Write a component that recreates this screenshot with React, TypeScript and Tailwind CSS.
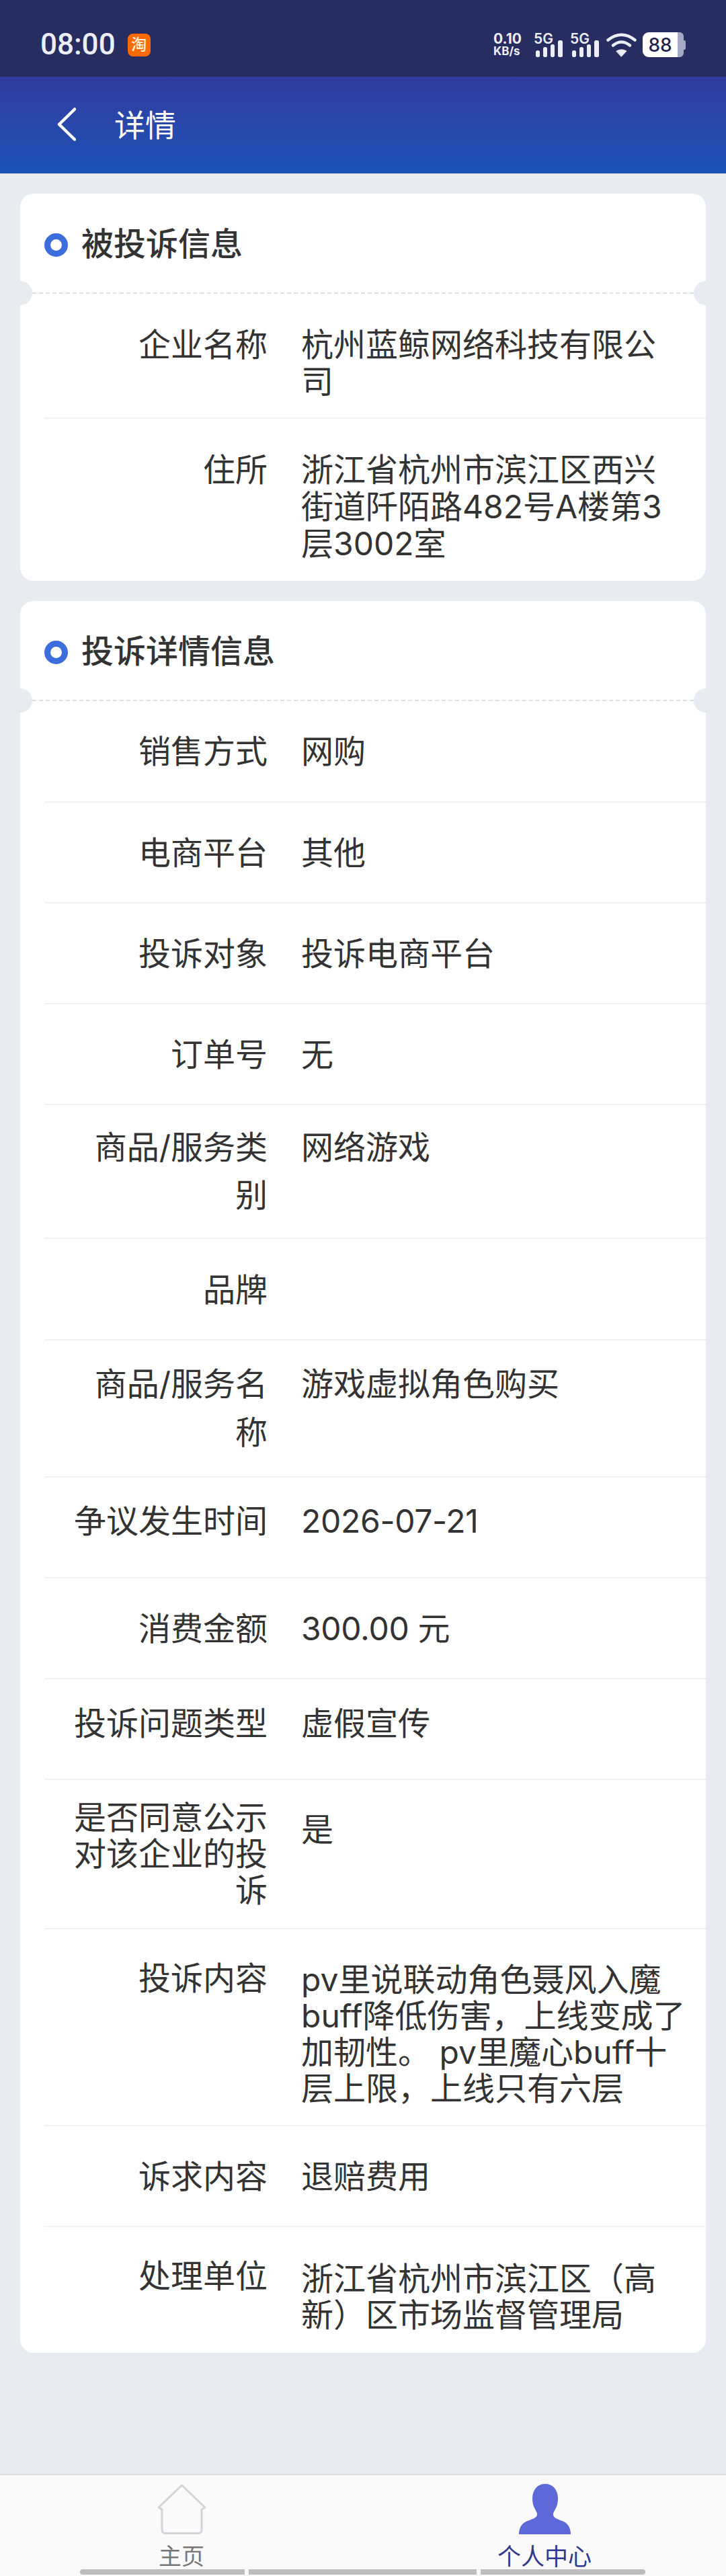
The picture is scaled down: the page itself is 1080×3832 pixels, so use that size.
type Row = {
  label: string;
  value?: string;
  rowClass: string;
  valueClass?: string;
};

const companyRows: Row[] = [
  { label: '企业名称', value: '杭州蓝鲸网络科技有限公司', rowClass: 'pt-[48px] pb-[26px] leading-[55px]' },
  { label: '住所', value: '浙江省杭州市滨江区西兴街道阡陌路482号A楼第3层3002室', rowClass: 'border-t-2 pt-[48px] pb-[28px] leading-[55px]' },
];

const detailRows: Row[] = [
  { label: '销售方式', value: '网购', rowClass: 'pt-[48px] pb-[47px] leading-[54px]' },
  { label: '电商平台', value: '其他', rowClass: 'border-t-2 pt-[48px] pb-[46px] leading-[54px]' },
  { label: '投诉对象', value: '投诉电商平台', rowClass: 'border-t-2 pt-[48px] pb-[46px] leading-[54px]' },
  { label: '订单号', value: '无', rowClass: 'border-t-2 pt-[48px] pb-[46px] leading-[54px]' },
  { label: '商品/服务类别', value: '网络游戏', rowClass: 'border-t-2 pt-[27px] pb-[28px] leading-[71px]' },
  { label: '品牌', rowClass: 'border-t-2 pt-[49px] pb-[46px] leading-[54px]' },
  { label: '商品/服务名称', value: '游戏虚拟角色购买', rowClass: 'border-t-2 pt-[29px] pb-[29px] leading-[72px]' },
  { label: '争议发生时间', value: '2026-07-21', rowClass: 'border-t-2 pt-[38px] pb-[56px] leading-[54px]', valueClass: 'tracking-[-0.3px]' },
  { label: '消费金额', value: '300.00 元', rowClass: 'border-t-2 pt-[48px] pb-[46px] leading-[54px]', valueClass: 'tracking-[-0.3px]' },
  { label: '投诉问题类型', value: '虚假宣传', rowClass: 'border-t-2 pt-[39px] pb-[55px] leading-[54px]' },
  { label: '是否同意公示对该企业的投诉', value: '是', rowClass: 'border-t-2 pt-[29px] pb-[29px] leading-[54px]', valueClass: 'pt-[18px]' },
  {
    label: '投诉内容',
    value: 'pv里说联动角色聂风入魔buff降低伤害，上线变成了加韧性。 pv里魔心buff十层上限，上线只有六层',
    rowClass: 'border-t-2 pt-[46px] pb-[27px] leading-[54px]',
    valueClass: 'pt-[2px]',
  },
  { label: '诉求内容', value: '退赔费用', rowClass: 'border-t-2 pt-[48px] pb-[46px] leading-[54px]' },
  {
    label: '处理单位',
    value: '浙江省杭州市滨江区（高新）区市场监督管理局',
    rowClass: 'border-t-2 pt-[46px] pb-[29px] leading-[54px]',
    valueClass: 'pt-[4px]',
  },
];

function Signal() {
  return (
    <div className="relative w-[43px] h-[37px]">
      <span className="absolute left-0 top-0 text-[21px] leading-[19px] font-semibold text-[#eceef7]">5G</span>
      <svg viewBox="0 0 43 25" className="absolute left-0 bottom-0 w-[43px] h-[25px]" fill="#eceef7">
        <rect x="3" y="15" width="6" height="10" rx="2.5" />
        <rect x="14" y="10" width="6" height="15" rx="2.5" />
        <rect x="25" y="6" width="6" height="19" rx="2.5" />
        <rect x="36" y="0" width="7" height="25" rx="2.5" />
      </svg>
    </div>
  );
}

function StatusBar() {
  return (
    <div className="h-[114px] bg-[#272c61] pt-[48px] pl-[60px] flex items-start text-[#eceef7]">
      <div className="flex items-center h-[37px]">
        <span className="text-[44px] leading-[37px] font-medium font-['Roboto',sans-serif]">08:00</span>
        <span className="ml-[18px] w-[34px] h-[34px] rounded-[8px] bg-[#ff6a00] flex items-center justify-center text-[23px] leading-none font-medium text-[#fff3e0]">
          淘
        </span>
      </div>
      <div className="ml-auto mr-[60px] flex items-start h-[37px]">
        <div className="w-[44px] flex flex-col items-start font-bold">
          <span className="text-[21px] leading-[20px]">0.10</span>
          <span className="text-[17px] leading-[17px]">KB/s</span>
        </div>
        <div className="ml-[16px]">
          <Signal />
        </div>
        <div className="ml-[11px]">
          <Signal />
        </div>
        <svg viewBox="0 0 45 37" className="ml-[11px] w-[45px] h-[37px]" fill="none" stroke="#eceef7" strokeWidth="4.5" strokeLinecap="round">
          <path d="M2.5 11.5 Q22.5 -4 42.5 11.5" />
          <path d="M10 19.5 Q22.5 9.5 35 19.5" />
          <path d="M15 28 Q22.5 23.5 30 28 L22.5 36 Z" fill="#eceef7" strokeWidth="1" strokeLinejoin="round" />
        </svg>
        <div className="ml-[9px] flex items-center h-[37px]">
          <span className="w-[52px] h-[37px] bg-white rounded-l-[9px] flex items-center justify-center text-[28px] leading-none font-medium text-[#1f2350]">
            88
          </span>
          <span className="w-[9px] h-[37px] bg-[#a6a9c4] rounded-r-[6px]" />
          <span className="w-[3px] h-[14px] bg-[#a6a9c4] rounded-r-[2px]" />
        </div>
      </div>
    </div>
  );
}

function InfoRow({ row }: { row: Row }) {
  return (
    <div className={`ml-[36px] flex border-[#f1f2f4] ${row.rowClass}`}>
      <div className="ml-[36px] w-[296px] shrink-0 text-right">{row.label}</div>
      <div className={`ml-[50px] w-[575px] ${row.valueClass ?? ''}`}>{row.value}</div>
    </div>
  );
}

function Card({ title, rows }: { title: string; rows: Row[] }) {
  return (
    <section className="relative bg-white rounded-[20px]">
      <div className="h-[147px] pt-[5px] pl-[36px] flex items-center">
        <span className="w-[35px] h-[35px] rounded-full border-[9px] border-[#3c6ddd]" />
        <h2 className="ml-[20px] pb-[3px] text-[48px] leading-[54px] font-medium">{title}</h2>
      </div>
      <div className="relative mx-[18px] border-t-2 border-dashed border-[#dfe1e5]">
        <span className="absolute left-[-36px] top-[-19px] w-[36px] h-[36px] rounded-full bg-[#e8ecf1]" />
        <span className="absolute right-[-36px] top-[-19px] w-[36px] h-[36px] rounded-full bg-[#e8ecf1]" />
      </div>
      {rows.map((row) => (
        <InfoRow key={row.label} row={row} />
      ))}
    </section>
  );
}

function TabBar() {
  return (
    <footer className="border-t-2 border-[#dcdfe3] bg-[#fafafa]">
      <div className="flex pt-[13px]">
        <div className="w-1/2 flex flex-col items-center">
          <svg viewBox="0 0 73 75" className="w-[73px] h-[75px]" fill="none" stroke="#d3d4da" strokeWidth="3" strokeLinejoin="round">
            <path d="M36.5 2 L2 35 L7 38 V68 Q7 73.5 12 73.5 H61 Q66 73.5 66 68 V38 L71 35 Z" />
          </svg>
          <span className="mt-[16px] text-[34px] leading-[34px] text-[#777777]">主页</span>
        </div>
        <div className="w-1/2 flex flex-col items-center">
          <svg viewBox="0 0 77 75" className="w-[77px] h-[75px]" fill="#5f68d9">
            <path d="M39 0 C50 0 58 8 58 22 C58 34 53 38 51 44 C50 50 56 52 64 55 C72 58 77 64 77 75 H0 C0 64 5 58 13 55 C21 52 28 50 27 44 C25 38 20 34 20 22 C20 8 28 0 39 0 Z" />
          </svg>
          <span className="mt-[16px] text-[35px] leading-[34px] text-[#2f3a8f]">个人中心</span>
        </div>
      </div>
      <div className="mt-[2px] mb-[2px] ml-[119px] flex gap-[6px]">
        <span className="w-[245px] h-[8px] bg-[#bdbdbd] rounded-l-full" />
        <span className="w-[339px] h-[8px] bg-[#bdbdbd]" />
        <span className="w-[245px] h-[8px] bg-[#bdbdbd] rounded-r-full" />
      </div>
    </footer>
  );
}

export default function App() {
  return (
    <div className="w-[1080px] min-h-[3832px] flex flex-col bg-[#e8ecf1] text-[48px] text-[#333333] font-['Inter','Noto_Sans_CJK_SC',sans-serif]">
      <StatusBar />
      <header className="h-[144px] bg-gradient-to-b from-[#303c9e] to-[#1a52b6] flex items-center pl-[85px] text-white">
        <svg viewBox="0 0 28 50" className="w-[28px] h-[50px] mt-[-2px]" fill="none" stroke="currentColor" strokeWidth="4.5" strokeLinecap="round" strokeLinejoin="round">
          <path d="M26 2.5 L3 25 L26 47.5" />
        </svg>
        <span className="ml-[57px] text-[46px] leading-[54px]">详情</span>
      </header>
      <main className="flex-1 px-[30px] pt-[30px] flex flex-col gap-[30px]">
        <Card title="被投诉信息" rows={companyRows} />
        <Card title="投诉详情信息" rows={detailRows} />
      </main>
      <TabBar />
    </div>
  );
}
